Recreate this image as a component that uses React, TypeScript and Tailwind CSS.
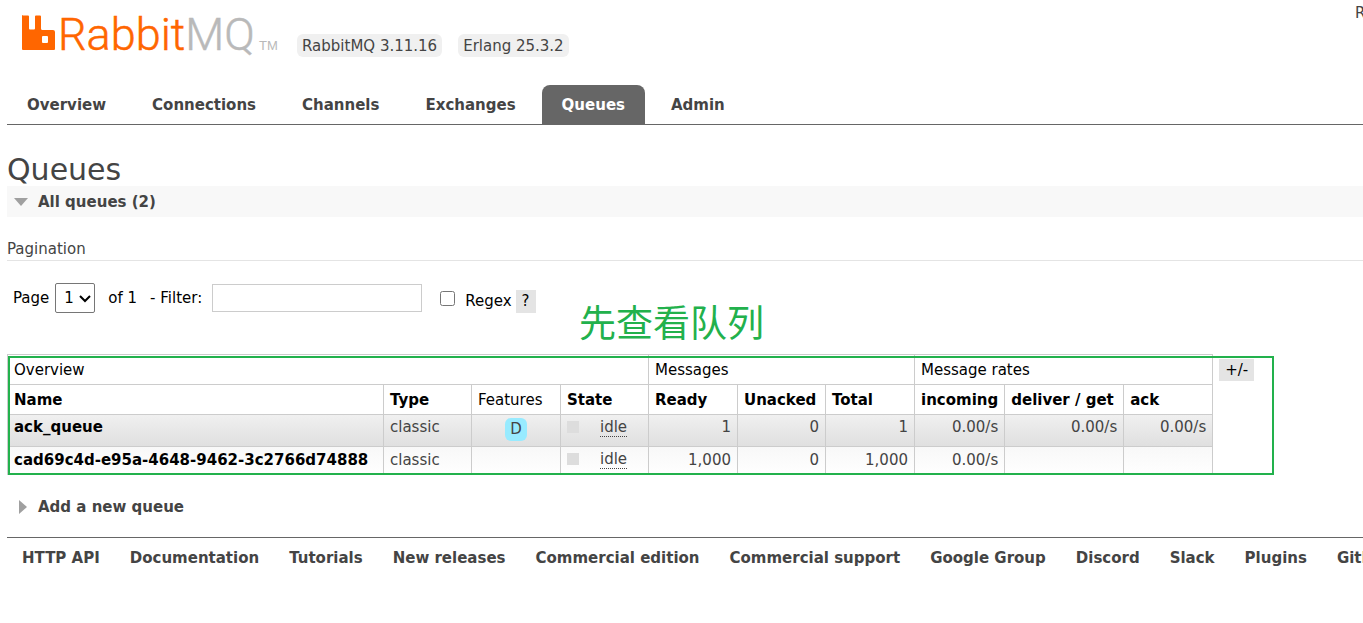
type Tab = { label: string; active?: boolean };

type Queue = {
  name: string;
  type: string;
  durable: boolean;
  state: string;
  ready: string;
  unacked: string;
  total: string;
  incoming: string;
  deliver: string;
  ack: string;
};

const tabs: Tab[] = [
  { label: "Overview" },
  { label: "Connections" },
  { label: "Channels" },
  { label: "Exchanges" },
  { label: "Queues", active: true },
  { label: "Admin" },
];

const queues: Queue[] = [
  {
    name: "ack_queue",
    type: "classic",
    durable: true,
    state: "idle",
    ready: "1",
    unacked: "0",
    total: "1",
    incoming: "0.00/s",
    deliver: "0.00/s",
    ack: "0.00/s",
  },
  {
    name: "cad69c4d-e95a-4648-9462-3c2766d74888",
    type: "classic",
    durable: false,
    state: "idle",
    ready: "1,000",
    unacked: "0",
    total: "1,000",
    incoming: "0.00/s",
    deliver: "",
    ack: "",
  },
];

const footerLinks = [
  "HTTP API",
  "Documentation",
  "Tutorials",
  "New releases",
  "Commercial edition",
  "Commercial support",
  "Google Group",
  "Discord",
  "Slack",
  "Plugins",
  "GitHub",
];

const Logo = () => (
  <a href="#" aria-label="RabbitMQ" className="block">
    <svg width="260" height="60" viewBox="0 0 260 60" className="block">
      <path
        fill="#ff6600"
        fillRule="evenodd"
        d="M1 3.5h5q1 0 1 1v12q0 1 1 1h4q1 0 1-1v-12q0-1 1-1h4q1 0 1 1v12q0 1.5 1.500 1.500h10.500q2 0 2 2v17q0 1-1 1H1q-1 0-1-1v-33q0-1 1-1zM21 24q-1 0-1 1v5q0 1 1 1h4q1 0 1-1v-5q0-1-1-1z"
      />
      <text x="36" y="38" fontSize="45" className="font-[Roboto,sans-serif] font-light">
        <tspan fill="#ff6600" stroke="#ff6600" strokeWidth="0.5">Rabbit</tspan>
        <tspan fill="#b9b9b9" stroke="#b9b9b9" strokeWidth="0.5">MQ</tspan>
      </text>
      <text x="237" y="38" fontSize="13" fill="#b9b9b9" className="font-['Liberation_Sans',sans-serif]">
        TM
      </text>
    </svg>
  </a>
);

const Header = () => (
  <header>
    <div className="flex h-[85px] items-start justify-between pt-1">
      <div className="flex pt-2 pl-[15px]">
        <Logo />
        <div className="flex items-start gap-4 pt-[22px] pl-[15px]">
          <span className="rounded-md bg-[#f0f0f0] px-[5px] pt-0.5 leading-[21px]">RabbitMQ 3.11.16</span>
          <span className="rounded-md bg-[#f0f0f0] px-[5px] pt-0.5 leading-[21px]">Erlang 25.3.2</span>
        </div>
      </div>
      <div className="w-2 leading-[18px]">Refreshed</div>
    </div>
    <nav className="flex gap-1.5 border-b border-[#666]">
      {tabs.map((tab) => (
        <a
          key={tab.label}
          href="#"
          className={
            tab.active
              ? "rounded-t-lg bg-[#666] px-5 pt-0.5 leading-[37px] font-bold text-white"
              : "px-5 pt-0.5 leading-[37px] font-bold"
          }
        >
          {tab.label}
        </a>
      ))}
    </nav>
  </header>
);

const Pagination = () => (
  <div className="flex h-[30px] items-center px-1.5 text-black">
    <label htmlFor="page">Page</label>
    <div className="relative ml-1.5">
      <select
        id="page"
        className="block h-[30px] w-10 appearance-none rounded-xs border border-[#767676] bg-white pl-2"
      >
        <option>1</option>
      </select>
      <svg
        width="12"
        height="8"
        viewBox="0 0 12 8"
        fill="none"
        stroke="#000"
        strokeWidth="2"
        className="pointer-events-none absolute top-3 right-1"
      >
        <path d="M1 1l5 5 5-5" />
      </svg>
    </div>
    <span className="ml-[13px]">of 1</span>
    <label htmlFor="filter" className="ml-[13px]">
      - Filter:
    </label>
    <input id="filter" type="text" className="ml-2.5 h-7 w-[210px] border border-[#ccc] bg-white px-1" />
    <input id="regex" type="checkbox" className="ml-[18px] h-[15px] w-[15px]" />
    <label htmlFor="regex" className="ml-2.5 pt-1.5">
      Regex
    </label>
    <button className="mt-1.5 ml-1 h-[23px] bg-[#e4e4e4] px-1.5">?</button>
  </div>
);

const th = "border border-[#ccc] px-1.5 pt-0.5 text-left";
const td = "border border-[#ccc] px-1.5 align-top";

const QueueTable = () => (
  <table className="table-fixed border-collapse text-black">
    <colgroup>
      <col className="w-[376px]" />
      <col className="w-[88px]" />
      <col className="w-[89px]" />
      <col className="w-[88px]" />
      <col className="w-[89px]" />
      <col className="w-[88px]" />
      <col className="w-[89px]" />
      <col className="w-[90px]" />
      <col className="w-[119px]" />
      <col className="w-[89px]" />
    </colgroup>
    <thead className="leading-[27px]">
      <tr>
        <th colSpan={4} className={`${th} font-normal`}>Overview</th>
        <th colSpan={3} className={`${th} font-normal`}>Messages</th>
        <th colSpan={3} className={`${th} font-normal`}>Message rates</th>
      </tr>
      <tr>
        <th className={th}>Name</th>
        <th className={th}>Type</th>
        <th className={`${th} font-normal`}>Features</th>
        <th className={th}>State</th>
        <th className={th}>Ready</th>
        <th className={th}>Unacked</th>
        <th className={th}>Total</th>
        <th className={th}>incoming</th>
        <th className={`${th} whitespace-nowrap`}>deliver / get</th>
        <th className={th}>ack</th>
      </tr>
    </thead>
    <tbody className="text-[#444]">
      {queues.map((q) => (
        <tr
          key={q.name}
          className="h-7 bg-linear-to-b from-[#f8f8f8] to-white leading-[26px] odd:h-8 odd:from-[#f0f0f0] odd:to-[#dfdfdf] odd:leading-6"
        >
          <td className={td}>
            <a href="#" className="font-bold text-black">{q.name}</a>
          </td>
          <td className={td}>{q.type}</td>
          <td className={`${td} pt-0.5 text-center`}>
            {q.durable && (
              <abbr title="durable: true" className="inline-block rounded-md bg-[#98ebff] px-[5px] leading-[23px] no-underline">
                D
              </abbr>
            )}
          </td>
          <td className={td}>
            <div className="flex items-start">
              <span className="mt-1.5 h-3 w-3 bg-[#ddd]" />
              <abbr title={q.state} className="mt-1 ml-[21px] border-b border-dotted border-[#444] leading-[17px] no-underline">
                {q.state}
              </abbr>
            </div>
          </td>
          <td className={`${td} text-right`}>{q.ready}</td>
          <td className={`${td} text-right`}>{q.unacked}</td>
          <td className={`${td} text-right`}>{q.total}</td>
          <td className={`${td} text-right`}>{q.incoming}</td>
          <td className={`${td} text-right`}>{q.deliver}</td>
          <td className={`${td} text-right`}>{q.ack}</td>
        </tr>
      ))}
    </tbody>
  </table>
);

const App = () => (
  <div className="overflow-hidden bg-white pl-[7px] font-[Verdana,'DejaVu_Sans',sans-serif] text-[15px] leading-[18px] text-[#444]">
    <Header />
    <main>
      <h1 className="pt-7 text-[30px] leading-[33px]">Queues</h1>
      <h2 className="flex items-center gap-2.5 bg-[#f8f8f8] pt-px pl-[7px] leading-[30px] font-bold">
        <svg width="14" height="8" viewBox="0 0 14 8" fill="#a0a0a0">
          <path d="M0 0h14L7 8z" />
        </svg>
        All queues (2)
      </h2>
      <h3 className="mt-[22px] mb-[22px] border-b border-[#e4e4e4] leading-[21px]">Pagination</h3>
      <Pagination />
      <div className="relative mt-[41px] flex w-max items-start pr-5">
        <QueueTable />
        <button className="mt-[5px] ml-1.5 h-[22px] bg-[#e4e4e4] px-1.5 text-black">+/-</button>
        <div className="pointer-events-none absolute top-0.5 right-0 bottom-0 left-px border-2 border-[#22b14c]" />
        <p className="absolute bottom-full left-[572px] mb-1.5 font-['Noto_Sans_CJK_SC',sans-serif] text-[37px] leading-[54px] text-[#22b14c]">
          先查看队列
        </p>
      </div>
      <h2 className="mt-[17px] flex items-center gap-[11px] pl-3 leading-[30px] font-bold">
        <svg width="8" height="14" viewBox="0 0 8 14" fill="#a0a0a0">
          <path d="M0 0v14l8-7z" />
        </svg>
        Add a new queue
      </h2>
    </main>
    <footer className="mt-[15px] flex gap-[30px] border-t border-[#666] pl-[15px] leading-10 font-bold whitespace-nowrap">
      {footerLinks.map((link) => (
        <a key={link} href="#">
          {link}
        </a>
      ))}
    </footer>
  </div>
);

export default App;
